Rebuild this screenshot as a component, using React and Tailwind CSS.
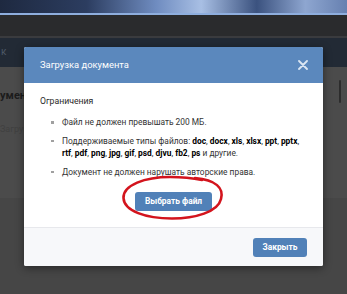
function Dot() {
  return (
    <span className="w-[22px] shrink-0 flex items-center pl-[11px] h-[12.5px]">
      <span className="block w-[2.5px] h-[2.5px] bg-[#a0a0a0]" />
    </span>
  );
}

function B({ children }) {
  return <b className="font-bold text-black">{children}</b>;
}

export default function App() {
  return (
    <div className="relative w-[347px] h-[294px] overflow-hidden bg-[#474747] flex flex-col font-[Roboto,sans-serif]">
      <div className="h-[13px] shrink-0 bg-[linear-gradient(90deg,#1e2940_0%,#2c3d60_25%,#6f8cc0_45%,#a8bfe4_58%,#3b527f_74%,#8ea6d0_88%,#6680b0_100%)]" />
      <div className="h-[2px] shrink-0 bg-[#8eaede]" />
      <div className="h-[21px] shrink-0 bg-[#2a2b2d]" />
      <div className="h-[2px] shrink-0 bg-[#3a3b3e]" />
      <div className="relative flex-1 flex flex-col">
        <div className="h-[29px] shrink-0 bg-[#222a35] flex items-start pl-[1px] pt-[8px]">
          <span className="text-[10px] leading-[12px] text-[#4d5866]">к</span>
        </div>
        <div className="h-[131px] shrink-0 bg-[#4b4b4b] flex justify-between">
          <div className="flex flex-col pt-[22px]">
            <span className="text-[11px] font-bold text-[#1c1c1c] leading-[14px]">ументы</span>
            <span className="text-[9px] text-[#404040] mt-[20px]">Загрузить</span>
          </div>
          <div className="w-[24px] flex justify-end pr-[6px] pt-[13px]">
            <div className="w-[2px] h-[23px] bg-[#2c2c2c] rounded-full" />
          </div>
        </div>
        <div className="flex-1 bg-[#464646]" />

        <div className="absolute left-[24px] top-[9px] w-[299px] h-[219px] flex flex-col rounded-[2px] overflow-hidden shadow-[0_2px_8px_rgba(0,0,0,0.45)] bg-white">
          <div className="h-[36px] shrink-0 bg-[#5b88bd] flex items-center justify-between pl-[16px] pr-[15px]">
            <span className="text-[9.4px] text-white">Загрузка документа</span>
            <svg width="10" height="10" viewBox="0 0 10 10">
              <path d="M1 1 L9 9 M9 1 L1 9" stroke="#dbe6f3" strokeWidth="1.8" strokeLinecap="round" />
            </svg>
          </div>
          <div className="h-[144px] shrink-0 px-[16px] pt-[11px] flex flex-col text-[#2a2a2a]">
            <div className="text-[8.7px] leading-[14px]">Ограничения</div>
            <ul className="mt-[8px] flex flex-col gap-[6px] text-[8.4px] leading-[12.5px] text-[#333]">
              <li className="flex">
                <Dot />
                <span className="whitespace-nowrap">Файл не должен превышать 200 МБ.</span>
              </li>
              <li className="flex">
                <Dot />
                <span className="whitespace-nowrap">
                  Поддерживаемые типы файлов: <B>doc</B>, <B>docx</B>, <B>xls</B>, <B>xlsx</B>, <B>ppt</B>, <B>pptx</B>,
                  <br />
                  <B>rtf</B>, <B>pdf</B>, <B>png</B>, <B>jpg</B>, <B>gif</B>, <B>psd</B>, <B>djvu</B>, <B>fb2</B>, <B>ps</B> и другие.
                </span>
              </li>
              <li className="flex">
                <Dot />
                <span className="whitespace-nowrap">Документ не должен нарушать авторские права.</span>
              </li>
            </ul>
            <div className="mt-[14px] flex justify-center">
              <button className="h-[19px] w-[77px] rounded-[3px] bg-[#5181b8] text-white text-[8.4px] font-bold">Выбрать файл</button>
            </div>
          </div>
          <div className="flex-1 bg-[#f7f8fa] border-t border-[#e7e8ec] flex items-center justify-end pr-[16px] pt-[1px]">
            <button className="h-[19px] w-[54px] rounded-[3px] bg-[#5181b8] text-white text-[8.4px] font-bold">Закрыть</button>
          </div>
        </div>
      </div>

      <svg className="absolute left-[120px] top-[174px]" width="106" height="48" viewBox="0 0 106 48">
        <path d="M75 4 C96 6, 104 14, 101 25 C98 38, 75 44.5, 52 44.5 C26 44.5, 4 37, 3.5 24 C3 11, 25 3, 50 3 C60 3, 70 3.5, 82 6" fill="none" stroke="#d3141d" strokeWidth="2.6" strokeLinecap="round" />
      </svg>
    </div>
  );
}
